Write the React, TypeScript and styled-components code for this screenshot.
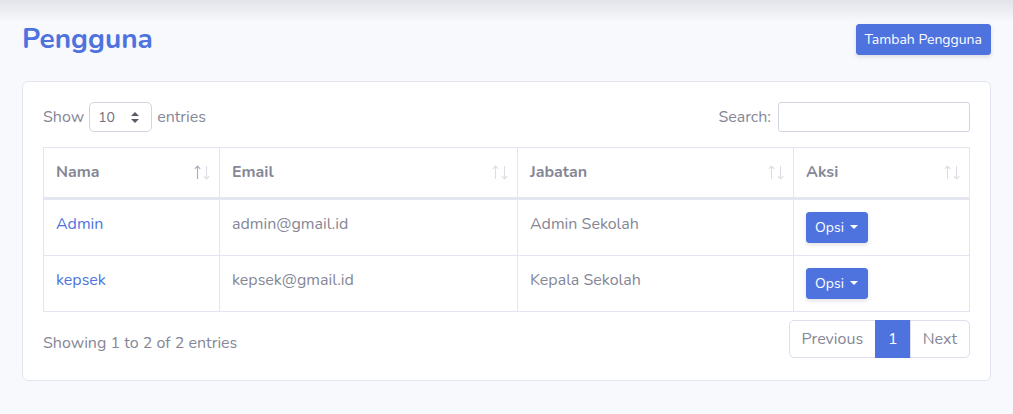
import styled, { createGlobalStyle } from "styled-components";

const GlobalStyle = createGlobalStyle`
  * { box-sizing: border-box; }
  html, body {
    margin: 0;
    padding: 0;
  }
  body {
    font-family: "Nunito", "Lato", "Liberation Sans", sans-serif;
    font-size: 16px;
    line-height: 1.5;
    color: #858796;
    background: linear-gradient(to bottom, #e3e4e9 0px, #f8f9fc 22px) no-repeat, #f8f9fc;
    min-height: 414px;
  }
`;

const Page = styled.div`
  padding: 22px 22px 0 22px;
`;

const PageHeader = styled.div`
  display: flex;
  align-items: center;
  justify-content: space-between;
  height: 35px;
  margin-bottom: 24px;
`;

const Title = styled.h3`
  margin: 0;
  font-size: 28px;
  font-weight: 700;
  line-height: 1.2;
  color: #4e73df;
`;

const PrimaryButton = styled.button`
  font-family: inherit;
  background: #4e73df;
  color: #fff;
  border: 1px solid #4e73df;
  border-radius: 3px;
  font-size: 14px;
  line-height: 1.5;
  padding: 4px 8px;
  box-shadow: 0 2px 4px rgba(58, 59, 69, 0.15);
  display: inline-flex;
  align-items: center;
  gap: 6px;
`;

const Caret = styled.span`
  display: inline-block;
  width: 0;
  height: 0;
  border-top: 4px solid #fff;
  border-left: 4px solid transparent;
  border-right: 4px solid transparent;
  margin-top: -2px;
  margin-right: 1px;
`;

const Card = styled.div`
  background: #fff;
  border: 1px solid #e3e6f0;
  border-radius: 6px;
  padding: 20px 20px 22px;
`;

const Controls = styled.div`
  display: flex;
  justify-content: space-between;
  align-items: center;
  height: 30px;
  margin-bottom: 15px;
`;

const ControlLabel = styled.label`
  display: flex;
  align-items: center;
  gap: 5px;
  font-size: 16px;
  color: #858796;
`;

const SelectBox = styled.div`
  width: 63px;
  height: 30px;
  border: 1px solid #d1d3e2;
  border-radius: 5px;
  display: flex;
  align-items: center;
  justify-content: space-between;
  padding: 0 12px 0 8px;
  font-size: 14px;
  color: #6e707e;
`;

const SearchInput = styled.input`
  width: 192px;
  height: 30px;
  border: 1px solid #d1d3e2;
  border-radius: 3px;
  margin-left: 2px;
  outline: none;
`;

const Table = styled.table`
  width: 100%;
  table-layout: fixed;
  border-collapse: separate;
  border-spacing: 0;
  border-top: 1px solid #e3e6f0;
  border-left: 1px solid #e3e6f0;
`;

const Th = styled.th`
  text-align: left;
  font-weight: 700;
  color: #858796;
  padding: 12px 12px 13px;
  line-height: 24px;
  border-right: 1px solid #e3e6f0;
  border-bottom: 3px solid #e3e6f0;
`;

const HeadInner = styled.div`
  display: flex;
  justify-content: space-between;
  align-items: center;
`;

const SortArrows = styled.span`
  display: inline-flex;
  gap: 2px;
  margin-right: -3px;
  margin-top: 1px;
`;

const Td = styled.td`
  vertical-align: top;
  padding: 12px;
  line-height: 24px;
  border-right: 1px solid #e3e6f0;
  border-bottom: 1px solid #e3e6f0;
  color: #858796;
`;

const NameLink = styled.a`
  color: #4e73df;
  text-decoration: none;
`;

const Footer = styled.div`
  display: flex;
  justify-content: space-between;
  align-items: flex-start;
  margin-top: 8px;
`;

const Info = styled.div`
  padding-top: 11px;
`;

const Pagination = styled.div`
  display: flex;
`;

const PageLink = styled.span<{ active?: boolean; pos?: "first" | "last" }>`
  padding: 8px 12px;
  line-height: 20px;
  border: 1px solid ${(p) => (p.active ? "#4e73df" : "#dddfeb")};
  background: ${(p) => (p.active ? "#4e73df" : "#fff")};
  color: ${(p) => (p.active ? "#fff" : "#858796")};
  margin-left: -1px;
  border-radius: ${(p) =>
    p.pos === "first" ? "5px 0 0 5px" : p.pos === "last" ? "0 5px 5px 0" : "0"};
`;

const users = [
  { name: "Admin", email: "admin@gmail.id", role: "Admin Sekolah" },
  { name: "kepsek", email: "kepsek@gmail.id", role: "Kepala Sekolah" },
];

const columns = [
  { label: "Nama", width: 176, sorted: true },
  { label: "Email", width: 298 },
  { label: "Jabatan", width: 276 },
  { label: "Aksi" },
];

function Sort({ active }: { active?: boolean }) {
  const up = active ? "#a9abb9" : "#dcdee6";
  const down = "#dcdee6";
  return (
    <SortArrows>
      <svg width="7" height="15" viewBox="0 0 7 15">
        <path d="M3.5 1 V14 M0.8 3.8 L3.5 1 L6.2 3.8" stroke={up} strokeWidth="1.1" fill="none" />
      </svg>
      <svg width="7" height="15" viewBox="0 0 7 15">
        <path d="M3.5 1 V14 M0.8 11.2 L3.5 14 L6.2 11.2" stroke={down} strokeWidth="1.1" fill="none" />
      </svg>
    </SortArrows>
  );
}

function App() {
  return (
    <>
      <GlobalStyle />
      <Page>
        <PageHeader>
          <Title>Pengguna</Title>
          <PrimaryButton>Tambah Pengguna</PrimaryButton>
        </PageHeader>
        <Card>
          <Controls>
            <ControlLabel>
              Show
              <SelectBox>
                10
                <svg width="8" height="11" viewBox="0 0 8 11">
                  <path d="M4 0 L8 4 L0 4 Z M0 7 L8 7 L4 11 Z" fill="#5a5c69" />
                </svg>
              </SelectBox>
              entries
            </ControlLabel>
            <ControlLabel>
              Search:
              <SearchInput />
            </ControlLabel>
          </Controls>
          <Table>
            <colgroup>
              {columns.map((c) => (
                <col key={c.label} style={c.width ? { width: c.width } : undefined} />
              ))}
            </colgroup>
            <thead>
              <tr>
                {columns.map((c) => (
                  <Th key={c.label}>
                    <HeadInner>
                      {c.label}
                      <Sort active={c.sorted} />
                    </HeadInner>
                  </Th>
                ))}
              </tr>
            </thead>
            <tbody>
              {users.map((u) => (
                <tr key={u.email}>
                  <Td>
                    <NameLink href="#">{u.name}</NameLink>
                  </Td>
                  <Td>{u.email}</Td>
                  <Td>{u.role}</Td>
                  <Td>
                    <PrimaryButton>
                      Opsi <Caret />
                    </PrimaryButton>
                  </Td>
                </tr>
              ))}
            </tbody>
          </Table>
          <Footer>
            <Info>Showing 1 to 2 of 2 entries</Info>
            <Pagination>
              <PageLink pos="first">Previous</PageLink>
              <PageLink active>1</PageLink>
              <PageLink pos="last">Next</PageLink>
            </Pagination>
          </Footer>
        </Card>
      </Page>
    </>
  );
}

export default App;
